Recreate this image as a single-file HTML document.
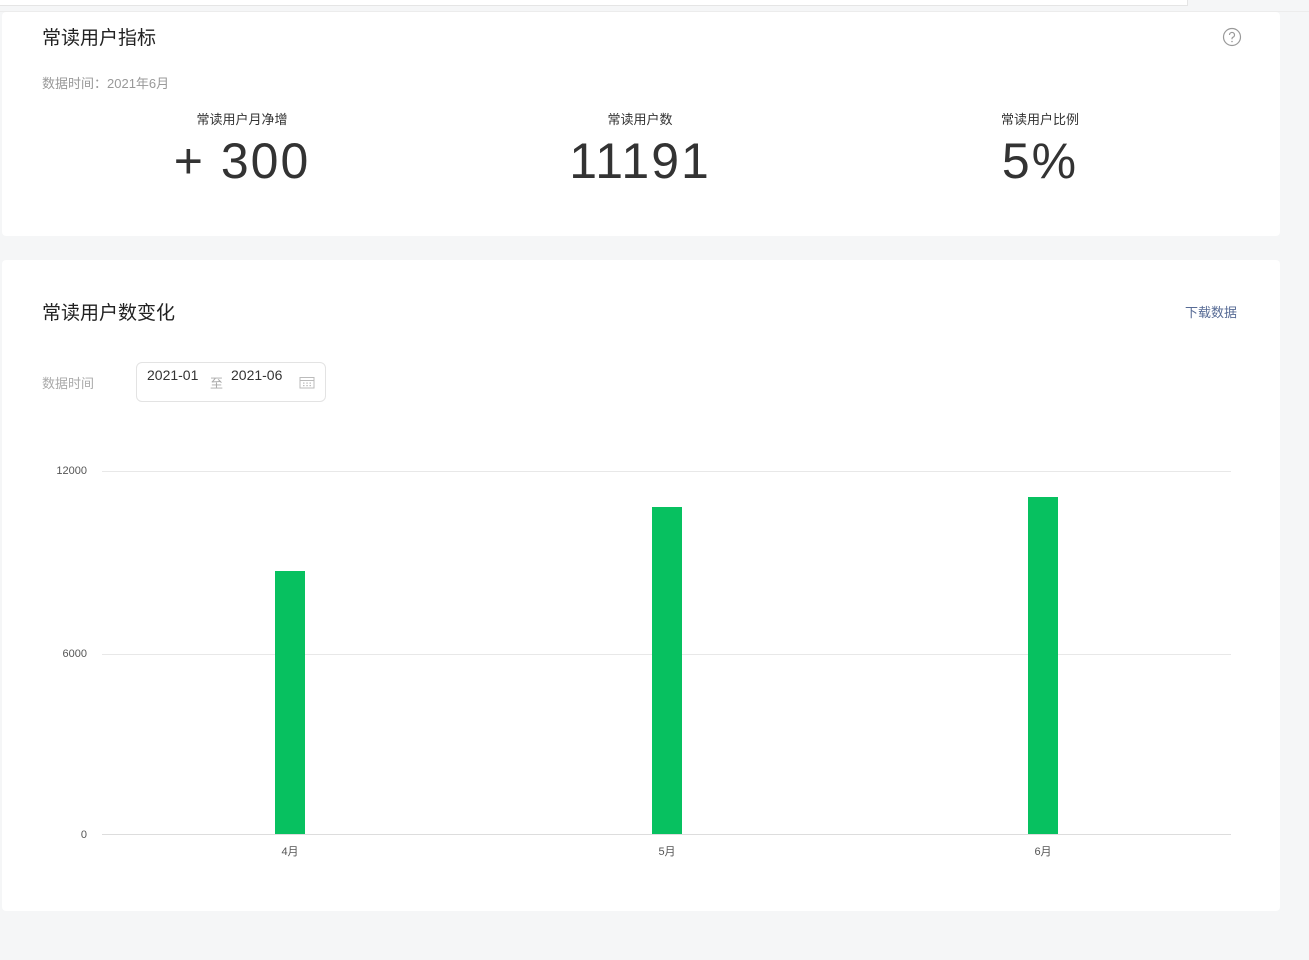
<!DOCTYPE html>
<html><head><meta charset="utf-8"><style>
*{margin:0;padding:0;box-sizing:border-box}
body{width:1309px;height:960px;background:#f5f6f7;font-family:"Liberation Sans","Noto Sans CJK SC",sans-serif;position:relative;overflow:hidden}
.top{position:absolute;left:0;top:0;width:1188px;height:6px;background:#fff;border-bottom:1px solid #e5e5e5;border-right:1px solid #e5e5e5}
.topline{position:absolute;left:0;top:11px;width:1309px;height:1px;background:#ececec}
.card{position:absolute;left:2px;width:1278px;background:#fff;border-radius:4px}
.t{position:absolute;font-size:19px;color:#222}
.s{position:absolute;font-size:13px;color:#999}
.m{position:absolute;text-align:center;width:300px}
.m .l{font-size:13px;color:#333}
.m .v{font-size:50px;color:#333;line-height:56px;margin-top:5px;letter-spacing:2px}
.y{position:absolute;font-size:11px;color:#555;right:1222px;text-align:right}
.g{position:absolute;left:102px;width:1129px;height:1px;background:#e8e8e8}
.bar{position:absolute;width:30px;background:#07c160}
.x{position:absolute;font-size:11px;color:#555;width:40px;text-align:center}
</style></head><body>
<div class="top"></div><div class="topline"></div>
<div class="card" style="top:12px;height:224px"></div>
<div class="t" style="left:42px;top:23px">常读用户指标</div>
<svg style="position:absolute;left:1222px;top:27px" width="20" height="20" viewBox="0 0 20 20"><circle cx="10" cy="10" r="8.5" fill="none" stroke="#999" stroke-width="1.2"/><path d="M7.5 8a2.5 2.5 0 1 1 3.3 2.3c-.6.3-.8.7-.8 1.4v.6" fill="none" stroke="#999" stroke-width="1.2"/><circle cx="10" cy="14.5" r=".8" fill="#999"/></svg>
<div class="s" style="left:42px;top:73px;color:#999">数据时间：2021年6月</div>
<div class="m" style="left:92px;top:109px"><div class="l">常读用户月净增</div><div class="v">+ 300</div></div>
<div class="m" style="left:490px;top:109px"><div class="l">常读用户数</div><div class="v">11191</div></div>
<div class="m" style="left:890px;top:109px"><div class="l">常读用户比例</div><div class="v">5%</div></div>

<div class="card" style="top:260px;height:651px"></div>
<div class="t" style="left:42px;top:298px">常读用户数变化</div>
<div style="position:absolute;left:1185px;top:302px;font-size:13px;color:#576b95">下载数据</div>
<div class="s" style="left:42px;top:373px;color:#aaa">数据时间</div>
<div style="position:absolute;left:136px;top:362px;width:190px;height:40px;border:1px solid #e3e3e3;border-radius:6px"></div>
<div style="position:absolute;left:147px;top:367px;font-size:14px;color:#333">2021-01</div>
<div style="position:absolute;left:210px;top:373px;font-size:13px;color:#aaa">至</div>
<div style="position:absolute;left:231px;top:367px;font-size:14px;color:#333">2021-06</div>
<svg style="position:absolute;left:299px;top:376px" width="16" height="13" viewBox="0 0 16 13"><rect x="1" y="1.5" width="14" height="10.5" fill="none" stroke="#bbb"/><path d="M1 4.5h14" stroke="#bbb"/><g fill="#bbb"><rect x="4" y="6.5" width="1.5" height="1.2"/><rect x="7.3" y="6.5" width="1.5" height="1.2"/><rect x="10.5" y="6.5" width="1.5" height="1.2"/><rect x="4" y="9" width="1.5" height="1.2"/><rect x="7.3" y="9" width="1.5" height="1.2"/><rect x="10.5" y="9" width="1.5" height="1.2"/></g></svg>

<div class="y" style="top:465px">12000</div>
<div class="y" style="top:648px">6000</div>
<div class="y" style="top:829px">0</div>
<div class="g" style="top:471px"></div>
<div class="g" style="top:654px"></div>
<div class="g" style="top:834px;background:#ddd"></div>
<div class="bar" style="left:275px;top:571px;height:263px"></div>
<div class="bar" style="left:652px;top:507px;height:327px"></div>
<div class="bar" style="left:1028px;top:497px;height:337px"></div>
<div class="x" style="left:270px;top:843px">4月</div>
<div class="x" style="left:647px;top:843px">5月</div>
<div class="x" style="left:1023px;top:843px">6月</div>
</body></html>
